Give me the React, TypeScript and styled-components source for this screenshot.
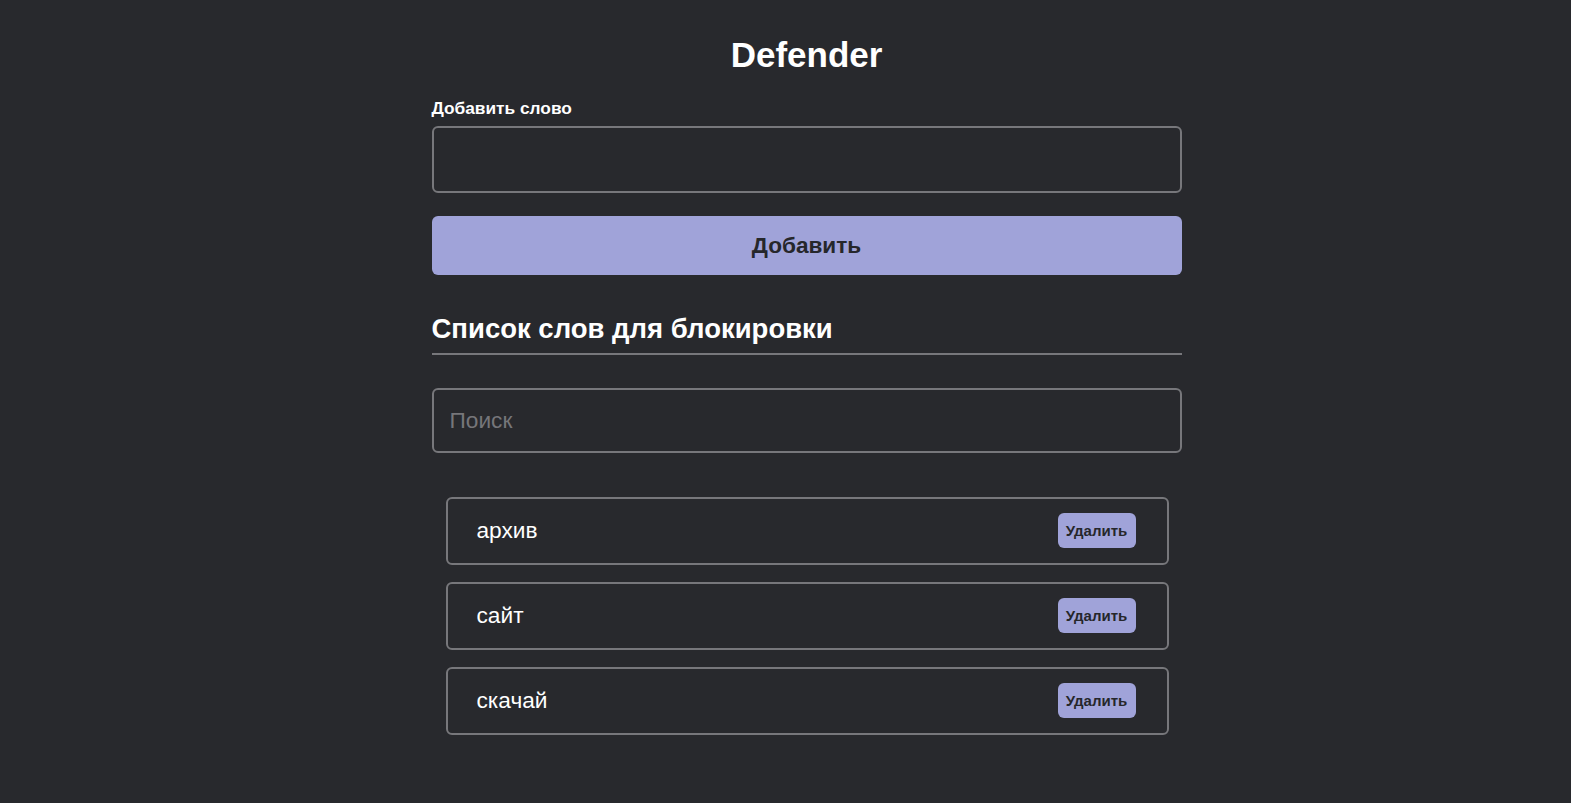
import React, { useState } from "react";
import styled, { createGlobalStyle } from "styled-components";

const Global = createGlobalStyle`
  * { box-sizing: border-box; }
  html, body { margin: 0; padding: 0; background: #28292d; }
  body { font-family: "Liberation Sans", Arial, sans-serif; color: #ffffff; }
`;

const Page = styled.div`
  min-height: 803px;
  padding: 35px 0 40px 42px;
`;

const Container = styled.div`
  width: 750px;
  margin: 0 auto;
  display: flex;
  flex-direction: column;
`;

const Title = styled.h1`
  margin: 0;
  text-align: center;
  font-size: 35px;
  font-weight: 700;
  line-height: 40px;
`;

const Label = styled.label`
  margin-top: 23px;
  font-size: 17.3px;
  font-weight: 700;
  line-height: 20px;
`;

const Input = styled.input<{ $mt: number; $h?: number }>`
  margin-top: ${(p) => p.$mt}px;
  width: 100%;
  height: ${(p) => p.$h ?? 67}px;
  background: transparent;
  border: 2px solid #77777b;
  border-radius: 6px;
  padding: 0 16px;
  color: #ffffff;
  font-family: "Liberation Sans", Arial, sans-serif;
  font-size: 22.7px;
  outline: none;
  &::placeholder { color: #76767a; }
`;

const AddButton = styled.button`
  margin-top: 23px;
  height: 59px;
  width: 100%;
  border: none;
  border-radius: 6px;
  background: #a0a3d9;
  color: #26272b;
  font-family: "Liberation Sans", Arial, sans-serif;
  font-size: 22.6px;
  font-weight: 700;
`;

const SectionTitle = styled.h2`
  margin: 38px 0 0;
  padding-bottom: 8px;
  border-bottom: 2px solid #77777b;
  font-size: 27.5px;
  font-weight: 700;
  line-height: 32px;
`;

const List = styled.ul`
  list-style: none;
  margin: 44px 13px 0 14px;
  padding: 0;
  display: flex;
  flex-direction: column;
  gap: 17px;
`;

const Item = styled.li`
  height: 68px;
  border: 2px solid #77777b;
  border-radius: 6px;
  display: flex;
  align-items: center;
  justify-content: space-between;
  padding: 0 31px 2px 29px;
`;

const Word = styled.span`
  font-size: 22.7px;
  color: #ffffff;
`;

const DeleteButton = styled.button`
  width: 78px;
  height: 35px;
  border: none;
  border-radius: 6px;
  background: #a0a3d9;
  color: #26272b;
  font-family: "Liberation Sans", Arial, sans-serif;
  font-size: 15px;
  font-weight: 700;
  padding: 0;
`;

export default function App() {
  const [words] = useState(["архив", "сайт", "скачай"]);
  return (
    <>
      <Global />
      <Page>
        <Container>
          <Title>Defender</Title>
          <Label htmlFor="word">Добавить слово</Label>
          <Input id="word" $mt={8} />
          <AddButton>Добавить</AddButton>
          <SectionTitle>Список слов для блокировки</SectionTitle>
          <Input $mt={33} $h={65} placeholder="Поиск" />
          <List>
            {words.map((w) => (
              <Item key={w}>
                <Word>{w}</Word>
                <DeleteButton>Удалить</DeleteButton>
              </Item>
            ))}
          </List>
        </Container>
      </Page>
    </>
  );
}
